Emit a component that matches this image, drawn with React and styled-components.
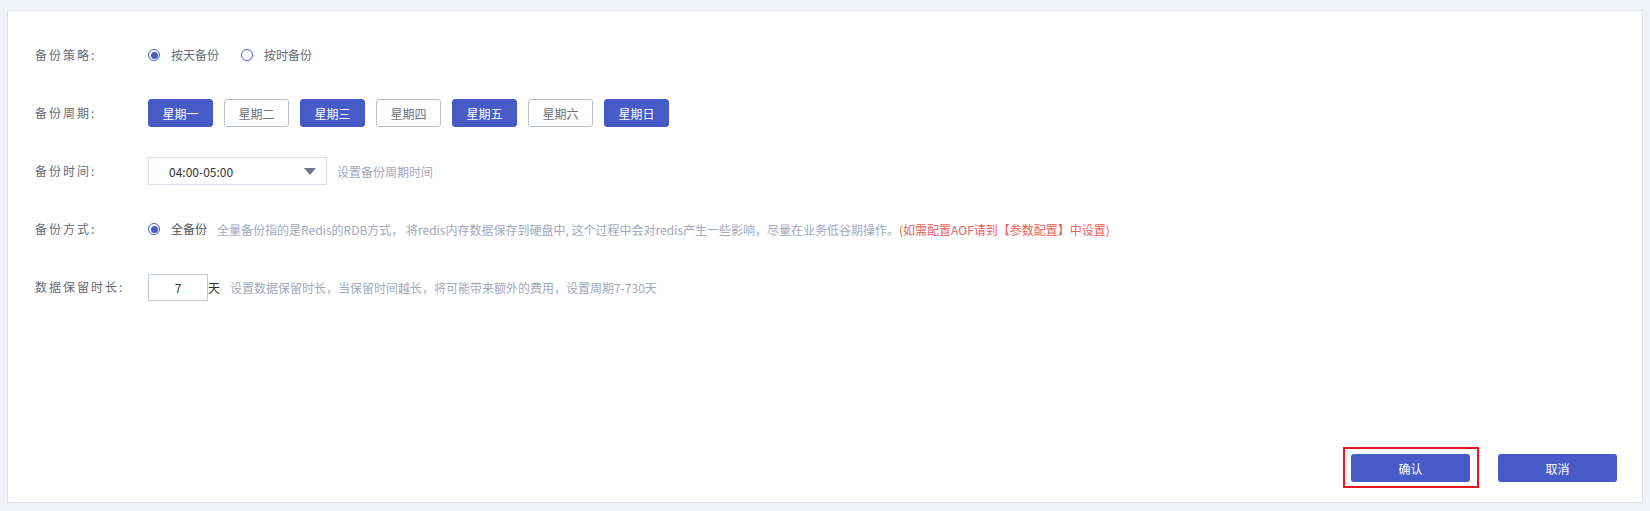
import React from "react";
import styled, { createGlobalStyle } from "styled-components";

const BLUE = "#475bc6";

const Global = createGlobalStyle`
  html, body { margin: 0; padding: 0; }
  body {
    background: #f0f2f7;
    font-family: "Noto Sans CJK SC", "Noto Sans", sans-serif;
    font-size: 12px;
  }
`;

const Page = styled.div`
  padding: 10px 7px 8px 7px;
  height: 511px;
  box-sizing: border-box;
`;

const Card = styled.div`
  box-sizing: border-box;
  height: 100%;
  background: #fff;
  border: 1px solid #dfe3ee;
  display: flex;
  flex-direction: column;
`;

const Form = styled.div`
  display: flex;
  flex-direction: column;
  gap: 30px;
  padding: 30px 0 0 27px;
`;

const Row = styled.div`
  display: flex;
  align-items: center;
  height: 28px;
`;

const Label = styled.div`
  width: 113px;
  flex: none;
  color: #666a78;
  font-size: 12px;
  letter-spacing: 2px;
  line-height: 28px;
`;

const Controls = styled.div`
  display: flex;
  align-items: center;
  gap: ${(p) => p.$gap || 0}px;
`;

const RadioItem = styled.label`
  display: flex;
  align-items: center;
  gap: 11px;
  color: ${(p) => (p.$strong ? "#4d5160" : "#666a78")};
  line-height: 16px;
`;

const RadioDot = styled.span`
  box-sizing: border-box;
  width: 12px;
  height: 12px;
  border-radius: 50%;
  border: 1px solid ${BLUE};
  display: flex;
  align-items: center;
  justify-content: center;
  &::after {
    content: "";
    width: 7px;
    height: 7px;
    border-radius: 50%;
    background: ${(p) => (p.$checked ? BLUE : "transparent")};
  }
`;

const DayButton = styled.button`
  box-sizing: border-box;
  width: 65px;
  height: 28px;
  border-radius: 3px;
  font-family: inherit;
  font-size: 12px;
  padding: 0;
  cursor: pointer;
  border: 1px solid ${(p) => (p.$active ? BLUE : "#b7bdd4")};
  background: ${(p) => (p.$active ? BLUE : "#fff")};
  color: ${(p) => (p.$active ? "#fff" : "#6b6f7e")};
`;

const Select = styled.div`
  box-sizing: border-box;
  width: 179px;
  height: 28px;
  border: 1px solid #d9dde9;
  display: flex;
  align-items: center;
  justify-content: space-between;
  padding: 0 10px 0 20px;
  color: #333;
  font-size: 12px;
`;

const Caret = styled.span`
  width: 0;
  height: 0;
  border-left: 6.5px solid transparent;
  border-right: 6.5px solid transparent;
  border-top: 7px solid #6f7489;
`;

const Hint = styled.span`
  color: #a2a8c0;
  font-size: 12px;
  margin-left: ${(p) => p.$ml || 0}px;
  white-space: nowrap;
`;

const Red = styled.span`
  color: #e8615a;
`;

const NumInput = styled.div`
  box-sizing: border-box;
  width: 60px;
  height: 27px;
  border: 1px solid #c3c9de;
  display: flex;
  align-items: center;
  justify-content: center;
  color: #333;
  font-size: 12px;
`;

const Unit = styled.span`
  color: #333;
  font-size: 12px;
`;

const Footer = styled.div`
  margin-top: auto;
  display: flex;
  justify-content: flex-end;
  gap: 28px;
  padding: 0 25px 20px 0;
`;

const ActionButton = styled.button`
  position: relative;
  box-sizing: border-box;
  width: 119px;
  height: 28px;
  border: none;
  border-radius: 3px;
  background: ${BLUE};
  color: #fff;
  font-family: inherit;
  font-size: 12px;
  cursor: pointer;
  &::after {
    content: "";
    display: ${(p) => (p.$highlight ? "block" : "none")};
    position: absolute;
    left: -8px;
    right: -9px;
    top: -7px;
    bottom: -6px;
    border: 2px solid #e5161d;
    pointer-events: none;
  }
`;

const days = [
  ["星期一", true],
  ["星期二", false],
  ["星期三", true],
  ["星期四", false],
  ["星期五", true],
  ["星期六", false],
  ["星期日", true],
];

export default function App() {
  return (
    <Page>
      <Global />
      <Card>
        <Form>
          <Row>
            <Label>备份策略:</Label>
            <Controls $gap={22}>
              <RadioItem>
                <RadioDot $checked />
                按天备份
              </RadioItem>
              <RadioItem>
                <RadioDot />
                按时备份
              </RadioItem>
            </Controls>
          </Row>
          <Row>
            <Label>备份周期:</Label>
            <Controls $gap={11}>
              {days.map(([d, a]) => (
                <DayButton key={d} $active={a}>
                  {d}
                </DayButton>
              ))}
            </Controls>
          </Row>
          <Row>
            <Label>备份时间:</Label>
            <Controls>
              <Select>
                <span>04:00-05:00</span>
                <Caret />
              </Select>
              <Hint $ml={10}>设置备份周期时间</Hint>
            </Controls>
          </Row>
          <Row>
            <Label>备份方式:</Label>
            <Controls>
              <RadioItem $strong>
                <RadioDot $checked />
                全备份
              </RadioItem>
              <Hint $ml={10}>
                全量备份指的是Redis的RDB方式， 将redis内存数据保存到硬盘中, 这个过程中会对redis产生一些影响，尽量在业务低谷期操作。
                <Red>(如需配置AOF请到【参数配置】中设置)</Red>
              </Hint>
            </Controls>
          </Row>
          <Row>
            <Label>数据保留时长:</Label>
            <Controls>
              <NumInput>7</NumInput>
              <Unit>天</Unit>
              <Hint $ml={10}>设置数据保留时长，当保留时间越长，将可能带来额外的费用，设置周期7-730天</Hint>
            </Controls>
          </Row>
        </Form>
        <Footer>
          <ActionButton $highlight>确认</ActionButton>
          <ActionButton>取消</ActionButton>
        </Footer>
      </Card>
    </Page>
  );
}
